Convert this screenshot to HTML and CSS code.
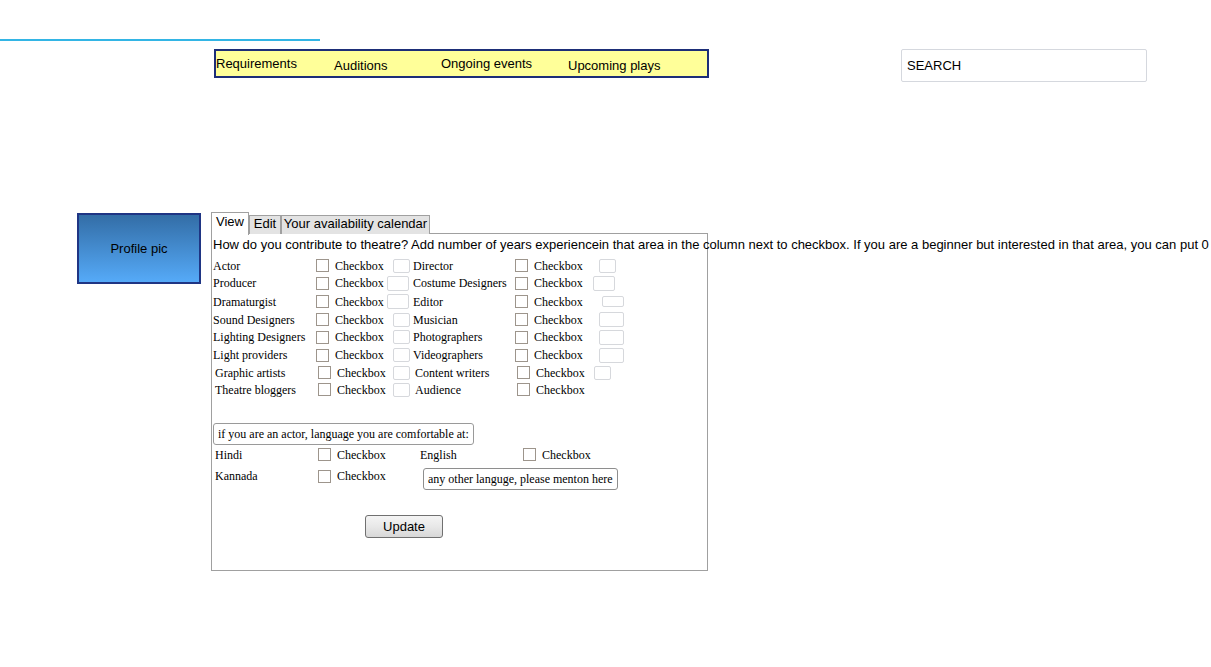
FILE: index.html
```html
<!DOCTYPE html>
<html>
<head>
<meta charset="utf-8">
<title>Profile</title>
<link rel="stylesheet" href="styles.css">
</head>
<body>
<div class="topline"></div>
<header class="header">
  <nav class="nav">
    <span class="nav-item w1">Requirements</span>
    <span class="nav-item w2 low">Auditions</span>
    <span class="nav-item w3">Ongoing events</span>
    <span class="nav-item w4 low">Upcoming plays</span>
  </nav>
  <div class="search">SEARCH</div>
</header>
<main class="main">
  <div class="profile">Profile pic</div>
  <section class="tabs-area">
    <div class="tabs">
      <span class="tab active t-view">View</span>
      <span class="tab t-edit">Edit</span>
      <span class="tab t-cal">Your availability calendar</span>
    </div>
    <div class="panel">
      <p class="question">How do you contribute to theatre? Add number of years experiencein that area in the column next to checkbox. If you are a beginner but interested in that area, you can put 0</p>
      <div class="roles">
        <span class="lbl">Actor</span><span class="cb"></span><span class="cbt">Checkbox</span><span class="yr"></span>
        <span class="lbl">Director</span><span class="cb"></span><span class="cbt">Checkbox</span><span class="yr r"></span>

        <span class="lbl">Producer</span><span class="cb"></span><span class="cbt">Checkbox</span><span class="yr wide"></span>
        <span class="lbl">Costume Designers</span><span class="cb"></span><span class="cbt">Checkbox</span><span class="yr wide r2"></span>

        <span class="lbl">Dramaturgist</span><span class="cb"></span><span class="cbt">Checkbox</span><span class="yr wide"></span>
        <span class="lbl">Editor</span><span class="cb"></span><span class="cbt">Checkbox</span><span class="yr wide r3 flat"></span>

        <span class="lbl">Sound Designers</span><span class="cb"></span><span class="cbt">Checkbox</span><span class="yr"></span>
        <span class="lbl">Musician</span><span class="cb"></span><span class="cbt">Checkbox</span><span class="yr wide r"></span>

        <span class="lbl">Lighting Designers</span><span class="cb"></span><span class="cbt">Checkbox</span><span class="yr"></span>
        <span class="lbl">Photographers</span><span class="cb"></span><span class="cbt">Checkbox</span><span class="yr wide r"></span>

        <span class="lbl">Light providers</span><span class="cb"></span><span class="cbt">Checkbox</span><span class="yr"></span>
        <span class="lbl">Videographers</span><span class="cb"></span><span class="cbt">Checkbox</span><span class="yr wide r"></span>

        <span class="lbl sh">Graphic artists</span><span class="cb sh"></span><span class="cbt sh">Checkbox</span><span class="yr"></span>
        <span class="lbl sh">Content writers</span><span class="cb sh"></span><span class="cbt sh">Checkbox</span><span class="yr l"></span>

        <span class="lbl sh">Theatre bloggers</span><span class="cb sh"></span><span class="cbt sh">Checkbox</span><span class="yr"></span>
        <span class="lbl sh">Audience</span><span class="cb sh"></span><span class="cbt sh">Checkbox</span><span class="empty"></span>
      </div>

      <div class="lang-title">if you are an actor, language you are comfortable at:</div>
      <div class="langs">
        <span class="lbl">Hindi</span><span class="cb"></span><span class="cbt">Checkbox</span>
        <span class="lbl">English</span><span class="cb"></span><span class="cbt">Checkbox</span>
        <span class="lbl">Kannada</span><span class="cb"></span><span class="cbt">Checkbox</span>
        <span class="other">any other languge, please menton here</span>
      </div>

      <div class="actions">
        <button class="update" type="button">Update</button>
      </div>
    </div>
  </section>
</main>
</body>
</html>
```
FILE: styles.css
```css
html, body {
  margin: 0;
  padding: 0;
  overflow: hidden;
  background: #ffffff;
}
body {
  font-family: "Liberation Sans", Arial, sans-serif;
  font-size: 13px;
  color: #000;
  width: 1211px;
  height: 667px;
}
.topline {
  width: 320px;
  height: 2px;
  margin-top: 39px;
  background: #33b5e5;
}
.header {
  display: flex;
  align-items: flex-start;
  padding-left: 214px;
  margin-top: 8px;
}
.nav {
  display: flex;
  box-sizing: border-box;
  width: 495px;
  height: 29px;
  border: 2px solid #1d2e78;
  background: #ffff99;
  padding-left: 0;
}
.nav-item {
  display: block;
  padding-top: 5px;
  line-height: 15px;
}
.nav-item.low { padding-top: 7px; }
.w1 { width: 118px; }
.w2 { width: 107px; }
.w3 { width: 127px; }
.w4 { width: 120px; }
.search {
  box-sizing: border-box;
  width: 246px;
  height: 33px;
  margin-left: 192px;
  border: 1px solid #d5d8de;
  border-radius: 2px;
  padding: 8px 0 0 5px;
  line-height: 15px;
}
.main {
  display: flex;
  align-items: flex-start;
  padding-left: 77px;
  margin-top: 130px;
}
.profile {
  box-sizing: border-box;
  width: 124px;
  height: 71px;
  margin-top: 1px;
  border: 2px solid #1f3584;
  background: linear-gradient(#336da6, #55aaf8);
  display: flex;
  align-items: center;
  justify-content: center;
}
.tabs-area {
  margin-left: 10px;
  width: 497px;
}
.tabs {
  display: flex;
  align-items: flex-end;
  height: 22px;
  position: relative;
  z-index: 1;
}
.tab {
  box-sizing: border-box;
  height: 19px;
  border: 1px solid #a0a0a0;
  border-bottom: none;
  background: #e3e3e3;
  padding: 0;
  text-align: center;
  line-height: 16px;
  white-space: nowrap;
}
.t-view { width: 38px; }
.t-edit { width: 32px; }
.t-cal { width: 149px; }
.tab.active {
  background: #fff;
  padding: 0;
  line-height: 17px;
  margin-bottom: -1px;
  height: 23px;
}
.panel {
  box-sizing: border-box;
  width: 497px;
  height: 338px;
  border: 1px solid #a0a0a0;
  margin-top: -1px;
  padding: 3px 0 0 1px;
}
.question {
  margin: 0;
  white-space: nowrap;
  line-height: 16px;
}
.roles, .langs {
  font-family: "Liberation Serif", "Times New Roman", serif;
  font-size: 12px;
}
.roles {
  display: grid;
  grid-template-columns: 103px 19px 58px 20px 102px 19px 64px 30px;
  grid-template-rows: 17px 18px 19px 17px 18px 18px 17px 17px;
  align-items: center;
  margin-top: 4px;
}
.lbl, .cbt {
  white-space: nowrap;
  line-height: 14px;
}
.sh { margin-left: 2px; }
.cb {
  display: block;
  box-sizing: border-box;
  width: 13px;
  height: 13px;
  border: 1px solid #9d958c;
  background: #fff;
}
.yr {
  display: block;
  box-sizing: border-box;
  width: 17px;
  height: 14px;
  border: 1px solid #d6d8dc;
  border-radius: 2px;
  background: #fff;
}
.yr.wide { width: 22px; margin-left: -6px; height: 15px; }
.yr.r { margin-left: 1px; width: 17px; }
.yr.r.wide { margin-left: 1px; width: 25px; }
.yr.r2 { margin-left: -5px; }
.yr.r3 { margin-left: 4px; height: 11px; }
.yr.l { margin-left: -4px; }
.lang-title {
  display: inline-block;
  box-sizing: border-box;
  height: 22px;
  margin-top: 25px;
  padding: 3px 4px 0 4px;
  border: 1px solid #9a9a9a;
  border-radius: 3px;
  font-family: "Liberation Serif", "Times New Roman", serif;
  font-size: 12px;
  line-height: 15px;
  white-space: nowrap;
}
.langs {
  display: grid;
  grid-template-columns: 103px 19px 83px 103px 19px 80px;
  grid-template-rows: 19px 24px;
  align-items: center;
  margin-top: 0;
  padding-left: 2px;
}
.other {
  grid-column: 4 / span 3;
  box-sizing: border-box;
  width: 195px;
  height: 22px;
  margin-left: 3px;
  margin-top: 6px;
  border: 1px solid #8e8e8e;
  border-radius: 3px;
  padding: 3px 0 0 4px;
  line-height: 15px;
  white-space: nowrap;
}
.actions {
  padding-left: 152px;
  margin-top: 27px;
}
.update {
  box-sizing: border-box;
  width: 78px;
  height: 23px;
  border: 1px solid #707070;
  border-radius: 3px;
  background: linear-gradient(#f4f4f4, #e8e8e8 50%, #d8d8d8);
  font-family: "Liberation Sans", Arial, sans-serif;
  font-size: 13px;
  color: #000;
  padding: 0;
}
```
